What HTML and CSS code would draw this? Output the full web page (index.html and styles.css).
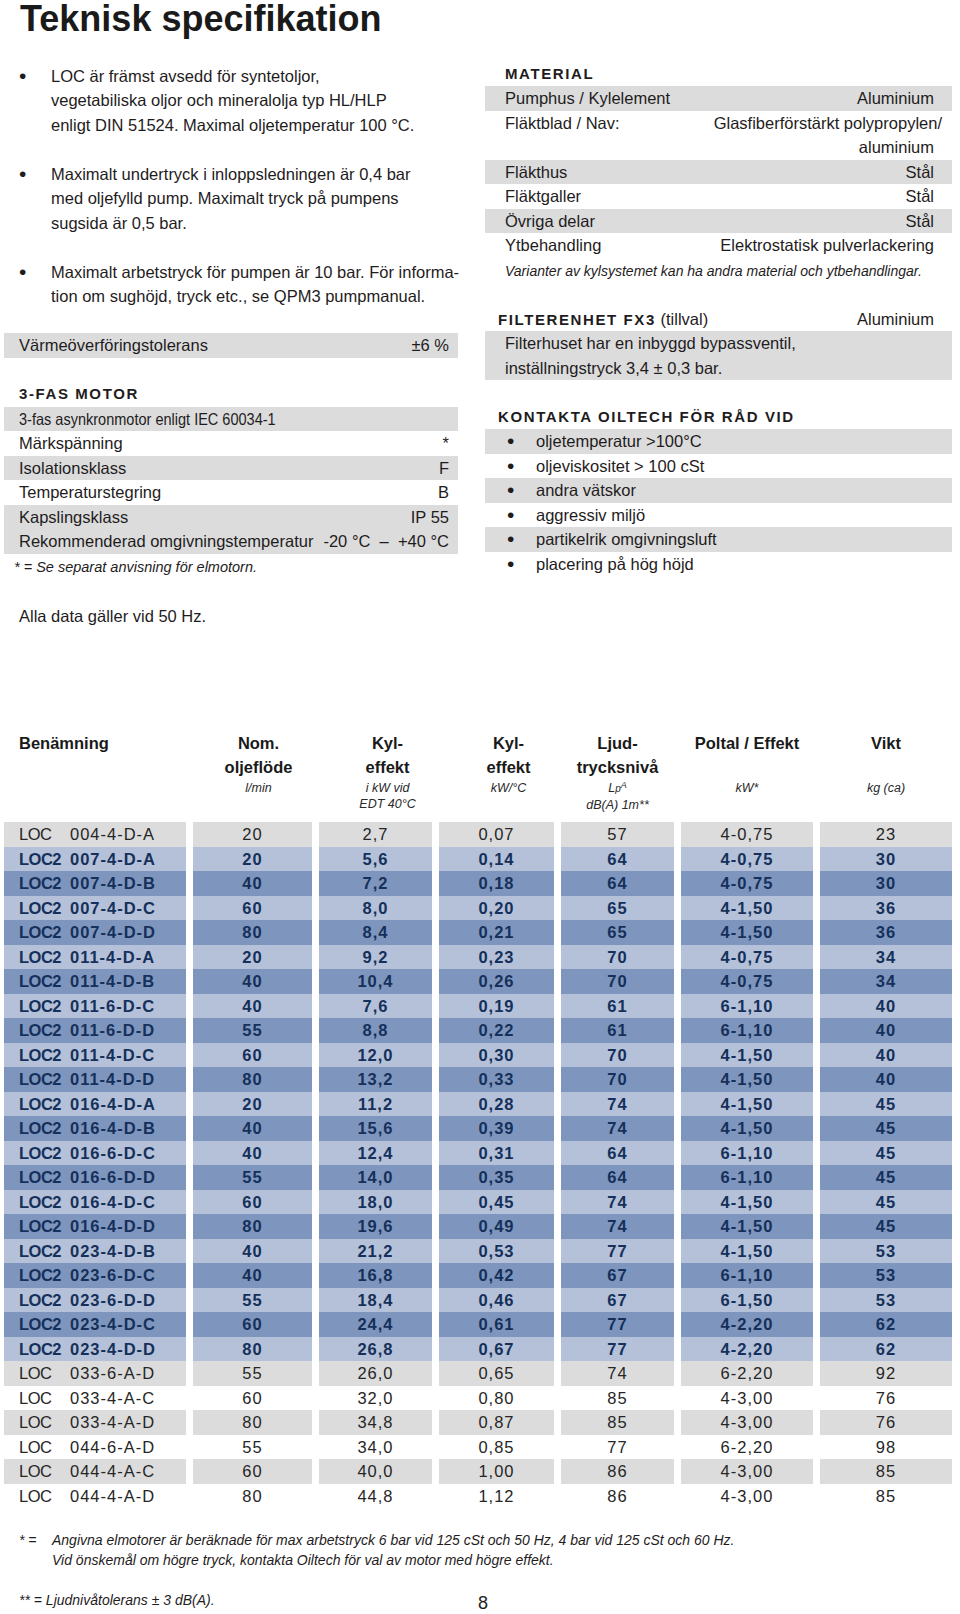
FILE: index.html
```html
<!DOCTYPE html>
<html lang="sv">
<head>
<meta charset="utf-8">
<title>Teknisk specifikation</title>
<link rel="stylesheet" href="styles.css">
</head>
<body>
<div class="page">
  <h1 class="title">Teknisk specifikation</h1>

  <div class="spec">
    <div class="col-left">
      <ul class="bullets">
        <li><span class="dot">•</span><p>LOC är främst avsedd för syntetoljor,<br>vegetabiliska oljor och mineralolja typ HL/HLP<br>enligt DIN 51524. Maximal oljetemperatur 100 °C.</p></li>
        <li><span class="dot">•</span><p>Maximalt undertryck i inloppsledningen är 0,4 bar<br>med oljefylld pump. Maximalt tryck på pumpens<br>sugsida är 0,5 bar.</p></li>
        <li><span class="dot">•</span><p>Maximalt arbetstryck för pumpen är 10 bar. För informa-<br>tion om sughöjd, tryck etc., se QPM3 pumpmanual.</p></li>
      </ul>

      <div class="row shade"><span>Värmeöverföringstolerans</span><span>±6 %</span></div>

      <h2 class="caps">3-FAS MOTOR</h2>
      <div class="row shade"><span class="narrow">3-fas asynkronmotor enligt IEC 60034-1</span></div>
      <div class="row"><span>Märkspänning</span><span>*</span></div>
      <div class="row shade"><span>Isolationsklass</span><span>F</span></div>
      <div class="row"><span>Temperaturstegring</span><span>B</span></div>
      <div class="row shade"><span>Kapslingsklass</span><span>IP 55</span></div>
      <div class="row shade"><span>Rekommenderad omgivningstemperatur</span><span class="pre">-20 °C  –  +40 °C</span></div>
      <p class="note-left">* = Se separat anvisning för elmotorn.</p>
      <p class="plain">Alla data gäller vid 50 Hz.</p>
    </div>

    <div class="col-right">
      <h2 class="caps caps-mat">MATERIAL</h2>
      <div class="rrow shade"><span>Pumphus / Kylelement</span><span>Aluminium</span></div>
      <div class="rrow double"><span>Fläktblad / Nav:</span><span class="val2"><span class="over">Glasfiberförstärkt polypropylen/</span><span>aluminium</span></span></div>
      <div class="rrow shade"><span>Fläkthus</span><span>Stål</span></div>
      <div class="rrow"><span>Fläktgaller</span><span>Stål</span></div>
      <div class="rrow shade"><span>Övriga delar</span><span>Stål</span></div>
      <div class="rrow"><span>Ytbehandling</span><span>Elektrostatisk pulverlackering</span></div>
      <p class="note-right">Varianter av kylsystemet kan ha andra material och ytbehandlingar.</p>

      <div class="head-row"><span><span class="caps-in">FILTERENHET FX3</span> (tillval)</span><span>Aluminium</span></div>
      <div class="filter shade">Filterhuset har en inbyggd bypassventil,<br>inställningstryck 3,4 ± 0,3 bar.</div>

      <h2 class="caps caps-k">KONTAKTA OILTECH FÖR RÅD VID</h2>
      <ul class="rlist">
        <li class="shade"><span class="rdot">•</span>oljetemperatur &gt;100°C</li>
        <li><span class="rdot">•</span>oljeviskositet &gt; 100 cSt</li>
        <li class="shade"><span class="rdot">•</span>andra vätskor</li>
        <li><span class="rdot">•</span>aggressiv miljö</li>
        <li class="shade"><span class="rdot">•</span>partikelrik omgivningsluft</li>
        <li><span class="rdot">•</span>placering på hög höjd</li>
      </ul>
    </div>
  </div>

  <div class="table">
    <div class="thead">
      <div class="th th-name"><div class="h">Benämning</div></div>
      <div class="th sh1"><div class="h">Nom.</div><div class="h">oljeflöde</div><div class="sub">l/min</div></div>
      <div class="th sh2"><div class="h">Kyl-</div><div class="h">effekt</div><div class="sub">i kW vid<br>EDT 40°C</div></div>
      <div class="th sh2"><div class="h">Kyl-</div><div class="h">effekt</div><div class="sub">kW/°C</div></div>
      <div class="th"><div class="h">Ljud-</div><div class="h">trycksnivå</div><div class="sub">L<span class="lp">p</span><sup>A</sup><br>dB(A) 1m**</div></div>
      <div class="th"><div class="h">Poltal / Effekt</div><div class="h">&nbsp;</div><div class="sub">kW*</div></div>
      <div class="th"><div class="h">Vikt</div><div class="h">&nbsp;</div><div class="sub">kg (ca)</div></div>
    </div>

    <div class="tr gray"><div class="td name"><span class="series">LOC</span><span>004-4-D-A</span></div><div class="td">20</div><div class="td">2,7</div><div class="td">0,07</div><div class="td">57</div><div class="td">4-0,75</div><div class="td">23</div></div>
    <div class="tr light"><div class="td name"><span class="series">LOC2</span><span>007-4-D-A</span></div><div class="td">20</div><div class="td">5,6</div><div class="td">0,14</div><div class="td">64</div><div class="td">4-0,75</div><div class="td">30</div></div>
    <div class="tr dark"><div class="td name"><span class="series">LOC2</span><span>007-4-D-B</span></div><div class="td">40</div><div class="td">7,2</div><div class="td">0,18</div><div class="td">64</div><div class="td">4-0,75</div><div class="td">30</div></div>
    <div class="tr light"><div class="td name"><span class="series">LOC2</span><span>007-4-D-C</span></div><div class="td">60</div><div class="td">8,0</div><div class="td">0,20</div><div class="td">65</div><div class="td">4-1,50</div><div class="td">36</div></div>
    <div class="tr dark"><div class="td name"><span class="series">LOC2</span><span>007-4-D-D</span></div><div class="td">80</div><div class="td">8,4</div><div class="td">0,21</div><div class="td">65</div><div class="td">4-1,50</div><div class="td">36</div></div>
    <div class="tr light"><div class="td name"><span class="series">LOC2</span><span>011-4-D-A</span></div><div class="td">20</div><div class="td">9,2</div><div class="td">0,23</div><div class="td">70</div><div class="td">4-0,75</div><div class="td">34</div></div>
    <div class="tr dark"><div class="td name"><span class="series">LOC2</span><span>011-4-D-B</span></div><div class="td">40</div><div class="td">10,4</div><div class="td">0,26</div><div class="td">70</div><div class="td">4-0,75</div><div class="td">34</div></div>
    <div class="tr light"><div class="td name"><span class="series">LOC2</span><span>011-6-D-C</span></div><div class="td">40</div><div class="td">7,6</div><div class="td">0,19</div><div class="td">61</div><div class="td">6-1,10</div><div class="td">40</div></div>
    <div class="tr dark"><div class="td name"><span class="series">LOC2</span><span>011-6-D-D</span></div><div class="td">55</div><div class="td">8,8</div><div class="td">0,22</div><div class="td">61</div><div class="td">6-1,10</div><div class="td">40</div></div>
    <div class="tr light"><div class="td name"><span class="series">LOC2</span><span>011-4-D-C</span></div><div class="td">60</div><div class="td">12,0</div><div class="td">0,30</div><div class="td">70</div><div class="td">4-1,50</div><div class="td">40</div></div>
    <div class="tr dark"><div class="td name"><span class="series">LOC2</span><span>011-4-D-D</span></div><div class="td">80</div><div class="td">13,2</div><div class="td">0,33</div><div class="td">70</div><div class="td">4-1,50</div><div class="td">40</div></div>
    <div class="tr light"><div class="td name"><span class="series">LOC2</span><span>016-4-D-A</span></div><div class="td">20</div><div class="td">11,2</div><div class="td">0,28</div><div class="td">74</div><div class="td">4-1,50</div><div class="td">45</div></div>
    <div class="tr dark"><div class="td name"><span class="series">LOC2</span><span>016-4-D-B</span></div><div class="td">40</div><div class="td">15,6</div><div class="td">0,39</div><div class="td">74</div><div class="td">4-1,50</div><div class="td">45</div></div>
    <div class="tr light"><div class="td name"><span class="series">LOC2</span><span>016-6-D-C</span></div><div class="td">40</div><div class="td">12,4</div><div class="td">0,31</div><div class="td">64</div><div class="td">6-1,10</div><div class="td">45</div></div>
    <div class="tr dark"><div class="td name"><span class="series">LOC2</span><span>016-6-D-D</span></div><div class="td">55</div><div class="td">14,0</div><div class="td">0,35</div><div class="td">64</div><div class="td">6-1,10</div><div class="td">45</div></div>
    <div class="tr light"><div class="td name"><span class="series">LOC2</span><span>016-4-D-C</span></div><div class="td">60</div><div class="td">18,0</div><div class="td">0,45</div><div class="td">74</div><div class="td">4-1,50</div><div class="td">45</div></div>
    <div class="tr dark"><div class="td name"><span class="series">LOC2</span><span>016-4-D-D</span></div><div class="td">80</div><div class="td">19,6</div><div class="td">0,49</div><div class="td">74</div><div class="td">4-1,50</div><div class="td">45</div></div>
    <div class="tr light"><div class="td name"><span class="series">LOC2</span><span>023-4-D-B</span></div><div class="td">40</div><div class="td">21,2</div><div class="td">0,53</div><div class="td">77</div><div class="td">4-1,50</div><div class="td">53</div></div>
    <div class="tr dark"><div class="td name"><span class="series">LOC2</span><span>023-6-D-C</span></div><div class="td">40</div><div class="td">16,8</div><div class="td">0,42</div><div class="td">67</div><div class="td">6-1,10</div><div class="td">53</div></div>
    <div class="tr light"><div class="td name"><span class="series">LOC2</span><span>023-6-D-D</span></div><div class="td">55</div><div class="td">18,4</div><div class="td">0,46</div><div class="td">67</div><div class="td">6-1,50</div><div class="td">53</div></div>
    <div class="tr dark"><div class="td name"><span class="series">LOC2</span><span>023-4-D-C</span></div><div class="td">60</div><div class="td">24,4</div><div class="td">0,61</div><div class="td">77</div><div class="td">4-2,20</div><div class="td">62</div></div>
    <div class="tr light"><div class="td name"><span class="series">LOC2</span><span>023-4-D-D</span></div><div class="td">80</div><div class="td">26,8</div><div class="td">0,67</div><div class="td">77</div><div class="td">4-2,20</div><div class="td">62</div></div>
    <div class="tr gray"><div class="td name"><span class="series">LOC</span><span>033-6-A-D</span></div><div class="td">55</div><div class="td">26,0</div><div class="td">0,65</div><div class="td">74</div><div class="td">6-2,20</div><div class="td">92</div></div>
    <div class="tr white"><div class="td name"><span class="series">LOC</span><span>033-4-A-C</span></div><div class="td">60</div><div class="td">32,0</div><div class="td">0,80</div><div class="td">85</div><div class="td">4-3,00</div><div class="td">76</div></div>
    <div class="tr gray"><div class="td name"><span class="series">LOC</span><span>033-4-A-D</span></div><div class="td">80</div><div class="td">34,8</div><div class="td">0,87</div><div class="td">85</div><div class="td">4-3,00</div><div class="td">76</div></div>
    <div class="tr white"><div class="td name"><span class="series">LOC</span><span>044-6-A-D</span></div><div class="td">55</div><div class="td">34,0</div><div class="td">0,85</div><div class="td">77</div><div class="td">6-2,20</div><div class="td">98</div></div>
    <div class="tr gray"><div class="td name"><span class="series">LOC</span><span>044-4-A-C</span></div><div class="td">60</div><div class="td">40,0</div><div class="td">1,00</div><div class="td">86</div><div class="td">4-3,00</div><div class="td">85</div></div>
    <div class="tr white"><div class="td name"><span class="series">LOC</span><span>044-4-A-D</span></div><div class="td">80</div><div class="td">44,8</div><div class="td">1,12</div><div class="td">86</div><div class="td">4-3,00</div><div class="td">85</div></div>
  </div>

  <div class="foot">
    <span class="mark">* =</span>
    <p>Angivna elmotorer är beräknade för max arbetstryck 6 bar vid 125 cSt och 50 Hz, 4 bar vid 125 cSt och 60 Hz.<br>Vid önskemål om högre tryck, kontakta Oiltech för val av motor med högre effekt.</p>
  </div>
  <div class="last">
    <p class="foot2">** = Ljudnivåtolerans ± 3 dB(A).</p>
    <span class="pageno">8</span>
  </div>
</div>
</body>
</html>
```

FILE: styles.css
```css
* { box-sizing: border-box; }
html, body { margin: 0; padding: 0; background: #ffffff; }
body {
  font-family: "Liberation Sans", Arial, sans-serif;
  font-size: 16.5px;
  line-height: 24.5px;
  color: #1f1c1d;
}
p { margin: 0; }
ul { list-style: none; margin: 0; padding: 0; }

.page { width: 960px; padding: 0 8px 0 4px; }

.title {
  margin: 0 0 0 16px;
  font-size: 36px;
  line-height: 38px;
  font-weight: 700;
  color: #1a1a1a;
}

.spec {
  display: grid;
  grid-template-columns: 454px 467px;
  column-gap: 27px;
  align-items: start;
}
.col-left { padding-top: 25.75px; }
.col-right { padding-top: 23.5px; }

.shade { background: #dcdcdc; }

/* left column */
.bullets { padding-left: 15px; }
.bullets li { display: flex; margin-bottom: 24.5px; white-space: nowrap; }
.dot { width: 32px; flex: none; font-size: 21px; }

.row {
  display: flex;
  justify-content: space-between;
  height: 24.5px;
  padding: 0 9px 0 15px;
  white-space: nowrap;
}
.narrow {
  display: inline-block;
  font-size: 16.5px;
  transform: scaleX(0.88);
  transform-origin: left center;
}
.pre { white-space: pre; }

.caps {
  margin: 24.5px 0 0;
  padding-left: 15px;
  font-size: 15px;
  line-height: 24.5px;
  letter-spacing: 1.6px;
  font-weight: 700;
}
.note-left {
  padding-left: 10px;
  font-size: 14.5px;
  font-style: italic;
  line-height: 26px;
}
.plain { margin-top: 24px; padding-left: 15px; }

/* right column */
.caps-mat { margin-top: 0; padding-left: 20px; }
.caps-k { padding-left: 13px; }

.rrow {
  display: flex;
  justify-content: space-between;
  height: 24.5px;
  padding: 0 18px 0 20px;
  white-space: nowrap;
}
.rrow.double { height: 49px; }
.val2 { display: flex; flex-direction: column; align-items: flex-end; }
.over { margin-right: -8px; }

.note-right {
  padding-left: 20px;
  font-size: 14px;
  font-style: italic;
  line-height: 27px;
}

.head-row {
  display: flex;
  justify-content: space-between;
  margin-top: 22px;
  padding: 0 18px 0 13px;
  height: 24.5px;
  white-space: nowrap;
}
.caps-in { font-size: 15px; font-weight: 700; letter-spacing: 1.6px; }
.filter { padding-left: 20px; height: 49px; white-space: nowrap; }

.rlist li {
  display: flex;
  height: 24.5px;
  padding-left: 22px;
  white-space: nowrap;
}
.rdot { width: 29px; flex: none; font-size: 21px; }

/* table */
.table { margin-top: 102.5px; }
.thead, .tr {
  display: grid;
  grid-template-columns: 182px 119px 113px 115px 113px 132px 132px;
  column-gap: 7px;
}
.thead { margin-bottom: 9.25px; }
.th { text-align: center; font-weight: 700; color: #1a1a1a; }
.th .h { height: 24.5px; line-height: 24.5px; white-space: nowrap; }
.th .sub {
  font-weight: 400;
  font-style: italic;
  font-size: 12.5px;
  line-height: 16px;
  color: #2a2a2a;
}
.th-name { text-align: left; padding-left: 15px; }
.sh1 { padding-left: 12px; }
.sh2 { padding-left: 24px; }
.lp { font-size: 10px; }
.th sup { font-size: 9px; line-height: 0; vertical-align: 4px; }

.tr { height: 24.5px; }
.td {
  text-align: center;
  font-size: 16.5px;
  line-height: 24.5px;
  letter-spacing: 1px;
  white-space: nowrap;
  color: #262626;
}
.td.name { display: flex; text-align: left; padding-left: 15px; }
.series { width: 51px; flex: none; letter-spacing: -0.5px; }

.tr.gray .td { background: #dcdcdc; }
.tr.light .td { background: #b4c1d8; color: #15305b; font-weight: 700; }
.tr.dark .td { background: #7e96bd; color: #15305b; font-weight: 700; }

/* footnotes */
.foot {
  display: flex;
  margin-top: 22px;
  padding-left: 15px;
  font-size: 14px;
  font-style: italic;
  line-height: 20px;
  white-space: nowrap;
}
.mark { width: 33px; flex: none; }
.last {
  display: grid;
  grid-template-columns: 459px 40px;
  margin-top: 20px;
  line-height: 20px;
}
.foot2 { padding-left: 15px; font-size: 14px; font-style: italic; }
.pageno { text-align: center; font-size: 18px; line-height: 26px; }
```
